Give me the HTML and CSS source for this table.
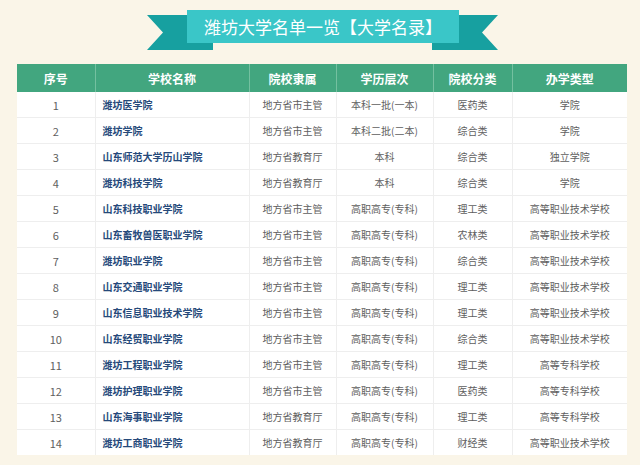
FILE: index.html
```html
<!DOCTYPE html>
<html lang="zh-CN">
<head>
<meta charset="utf-8">
<link rel="stylesheet" href="styles.css">
</head>
<body>
<div class="page">
  <div class="banner">
    <svg class="tails" width="351" height="40" viewBox="0 0 351 40">
      <polygon points="0,5 66,5 66,40 0,40 16,22.5" fill="#17a0a0"/>
      <polygon points="285,5 351,5 335,22.5 351,40 285,40" fill="#17a0a0"/>
    </svg>
    <div class="banner-box">潍坊大学名单一览【大学名录】</div>
  </div>
  <table class="list">
    <colgroup>
      <col class="c1"><col class="c2"><col class="c3"><col class="c4"><col class="c5"><col class="c6">
    </colgroup>
    <thead>
      <tr><th>序号</th><th>学校名称</th><th>院校隶属</th><th>学历层次</th><th>院校分类</th><th>办学类型</th></tr>
    </thead>
    <tbody>
      <tr><td>1</td><td class="name">潍坊医学院</td><td>地方省市主管</td><td>本科一批(一本)</td><td>医药类</td><td>学院</td></tr>
      <tr><td>2</td><td class="name">潍坊学院</td><td>地方省市主管</td><td>本科二批(二本)</td><td>综合类</td><td>学院</td></tr>
      <tr><td>3</td><td class="name">山东师范大学历山学院</td><td>地方省教育厅</td><td>本科</td><td>综合类</td><td>独立学院</td></tr>
      <tr><td>4</td><td class="name">潍坊科技学院</td><td>地方省教育厅</td><td>本科</td><td>综合类</td><td>学院</td></tr>
      <tr><td>5</td><td class="name">山东科技职业学院</td><td>地方省市主管</td><td>高职高专(专科)</td><td>理工类</td><td>高等职业技术学校</td></tr>
      <tr><td>6</td><td class="name">山东畜牧兽医职业学院</td><td>地方省市主管</td><td>高职高专(专科)</td><td>农林类</td><td>高等职业技术学校</td></tr>
      <tr><td>7</td><td class="name">潍坊职业学院</td><td>地方省市主管</td><td>高职高专(专科)</td><td>综合类</td><td>高等职业技术学校</td></tr>
      <tr><td>8</td><td class="name">山东交通职业学院</td><td>地方省市主管</td><td>高职高专(专科)</td><td>理工类</td><td>高等职业技术学校</td></tr>
      <tr><td>9</td><td class="name">山东信息职业技术学院</td><td>地方省市主管</td><td>高职高专(专科)</td><td>理工类</td><td>高等职业技术学校</td></tr>
      <tr><td>10</td><td class="name">山东经贸职业学院</td><td>地方省市主管</td><td>高职高专(专科)</td><td>综合类</td><td>高等职业技术学校</td></tr>
      <tr><td>11</td><td class="name">潍坊工程职业学院</td><td>地方省市主管</td><td>高职高专(专科)</td><td>理工类</td><td>高等专科学校</td></tr>
      <tr><td>12</td><td class="name">潍坊护理职业学院</td><td>地方省市主管</td><td>高职高专(专科)</td><td>医药类</td><td>高等专科学校</td></tr>
      <tr><td>13</td><td class="name">山东海事职业学院</td><td>地方省教育厅</td><td>高职高专(专科)</td><td>理工类</td><td>高等专科学校</td></tr>
      <tr><td>14</td><td class="name">潍坊工商职业学院</td><td>地方省教育厅</td><td>高职高专(专科)</td><td>财经类</td><td>高等职业技术学校</td></tr>
    </tbody>
  </table>
</div>
</body>
</html>
```
FILE: styles.css
```css
html, body {
  margin: 0;
  padding: 0;
  background: #faf5e8;
  font-family: "Noto Sans CJK SC", "Noto Sans", sans-serif;
}
.page {
  width: 640px;
  height: 465px;
  overflow: hidden;
  padding-top: 10px;
  box-sizing: border-box;
}
.banner {
  position: relative;
  width: 351px;
  height: 40px;
  margin-left: 147px;
}
.tails {
  position: absolute;
  left: 0;
  top: 0;
  display: block;
}
.banner-box {
  position: relative;
  margin-left: 40px;
  width: 272px;
  height: 33px;
  background: #3ac6c8;
  color: #ffffff;
  font-size: 17px;
  line-height: 33px;
  text-align: center;
}
.list {
  margin-top: 14px;
  margin-left: 17px;
  width: 610px;
  border-collapse: collapse;
  table-layout: fixed;
  background: #ffffff;
}
.c1 { width: 78px; }
.c2 { width: 154px; }
.c3 { width: 87px; }
.c4 { width: 97px; }
.c5 { width: 79px; }
.c6 { width: 115px; }
.list th {
  height: 28px;
  padding: 0;
  background: #42a67f;
  color: #ffffff;
  font-size: 12px;
  font-weight: bold;
  border-left: 1px solid #74c0a0;
  text-align: center;
}
.list th:first-child { border-left: none; }
.list td {
  height: 25px;
  padding: 0;
  font-size: 10px;
  color: #5e5e5e;
  text-align: center;
  border-top: 1px solid #eeeeee;
  border-left: 1px solid #eeeeee;
  white-space: nowrap;
}
.list td:first-child {
  border-left: none;
  font-size: 11px;
}
.list tbody tr:first-child td { border-top: none; }
.list td.name {
  text-align: left;
  padding-left: 7px;
  color: #25497a;
  font-weight: bold;
}
```
